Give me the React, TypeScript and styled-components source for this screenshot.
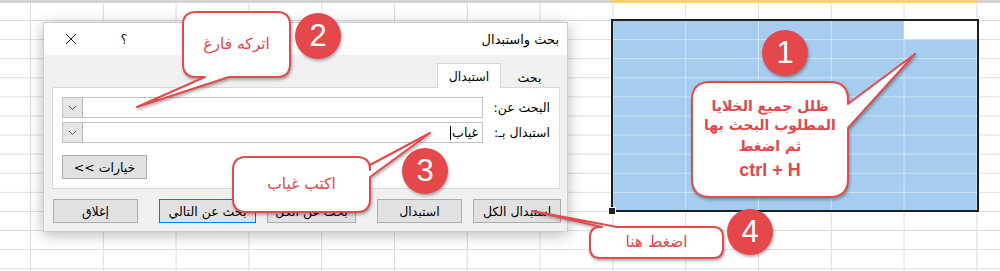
import React from "react";
import styled, { createGlobalStyle } from "styled-components";

const GlobalStyle = createGlobalStyle`
  html, body {
    margin: 0;
    padding: 0;
    background: #fff;
  }
  body {
    width: 1000px;
    height: 271px;
    overflow: hidden;
    font-family: "DejaVu Sans", "Liberation Sans", sans-serif;
  }
`;

const COL = 72.8;
const ROW = 19.1;
const RED = "#e4474b";

// sheet background
const Sheet = styled.div`
  position: relative;
  width: 1000px;
  height: 271px;
  overflow: hidden;
  background-color: #fff;
  background-image: linear-gradient(to right, #dcdcdc 1px, transparent 1px),
    linear-gradient(to bottom, #dcdcdc 1px, transparent 1px);
  background-size: ${COL}px ${ROW}px;
  background-position: 30px 20px;
`;

const HeaderEdge = styled.div`
  display: flex;
  height: 3px;
`;

const HeaderSegment = styled.div<{ $w?: number; $selected?: boolean }>`
  flex: ${(p) => (p.$w ? `0 0 ${p.$w}px` : "1")};
  background: ${(p) => (p.$selected ? "#f3d36f" : "#d4d4d4")};
`;

const Selection = styled.div`
  position: absolute;
  left: 611px;
  top: 19px;
  width: 368px;
  height: 193px;
  box-sizing: border-box;
  border: 2px solid #1f1f1f;
  background-color: #a6cdef;
  background-image: linear-gradient(to right, rgba(255, 255, 255, 0.45) 1px, transparent 1px),
    linear-gradient(to bottom, rgba(255, 255, 255, 0.45) 1px, transparent 1px);
  background-size: ${COL}px ${ROW}px;
  background-position: 72.2px 18.1px;
`;

const ActiveCell = styled.div`
  position: absolute;
  right: 0;
  top: 0;
  width: 73px;
  height: 18px;
  background: #fff;
`;

const FillHandle = styled.div`
  position: absolute;
  left: -5px;
  bottom: -5px;
  width: 6px;
  height: 6px;
  background: #1f1f1f;
  border: 1px solid #fff;
`;

// dialog
const Dialog = styled.div`
  position: absolute;
  left: 43px;
  top: 22px;
  width: 525px;
  height: 210px;
  box-sizing: border-box;
  display: flex;
  flex-direction: column;
  direction: rtl;
  border: 1px solid #cdcdcd;
  background: #f0f0f0;
  box-shadow: 0 3px 14px rgba(0, 0, 0, 0.28);
  font-size: 12.5px;
  color: #000;
`;

const TitleBar = styled.div`
  height: 32px;
  display: flex;
  align-items: center;
  background: #fff;
  padding-right: 8px;
`;

const Title = styled.div`
  flex: 1;
  font-size: 13px;
`;

const TitleButton = styled.div<{ $w: number }>`
  width: ${(p) => p.$w}px;
  height: 32px;
  display: flex;
  align-items: center;
  justify-content: center;
  color: #222;
  font-size: 13px;
`;

const Body = styled.div`
  flex: 1;
  display: flex;
  flex-direction: column;
  padding: 8px 7px 0 8px;
`;

const Tabs = styled.div`
  display: flex;
  height: 24px;
  padding-right: 2px;
`;

const Tab = styled.div<{ $w: number; $active?: boolean }>`
  width: ${(p) => p.$w}px;
  box-sizing: border-box;
  display: flex;
  align-items: center;
  justify-content: center;
  position: relative;
  z-index: 1;
  height: ${(p) => (p.$active ? "25px" : "22px")};
  margin-top: ${(p) => (p.$active ? "0" : "3px")};
  background: ${(p) => (p.$active ? "#fff" : "transparent")};
  border: 1px solid ${(p) => (p.$active ? "#d9d9d9" : "transparent")};
  border-bottom: none;
`;

const Panel = styled.div`
  height: 102px;
  box-sizing: border-box;
  background: #fff;
  border: 1px solid #d9d9d9;
  padding: 9px 0 0 9px;
  display: flex;
  flex-direction: column;
`;

const FieldGrid = styled.div`
  display: grid;
  grid-template-columns: 76px 421px;
  row-gap: 4px;
  align-items: center;
`;

const Label = styled.div`
  padding-right: 9px;
  white-space: nowrap;
`;

const Combo = styled.div`
  height: 21px;
  display: flex;
  box-sizing: border-box;
  border: 1px solid #c2c2c2;
  background: #fff;
`;

const ComboInput = styled.div`
  flex: 1;
  display: flex;
  align-items: center;
  padding-right: 4px;
`;

const Caret = styled.span`
  display: inline-block;
  width: 1px;
  height: 14px;
  background: #000;
  margin-right: 1px;
`;

const DropButton = styled.div`
  width: 19px;
  display: flex;
  align-items: center;
  justify-content: center;
  background: #e6e6e6;
  border-right: 1px solid #b4b4b4;
`;

const OptionsRow = styled.div`
  display: flex;
  justify-content: flex-end;
  margin-top: 12px;
`;

const DlgButton = styled.div<{ $w: number; $default?: boolean }>`
  width: ${(p) => p.$w}px;
  height: 24px;
  box-sizing: border-box;
  display: flex;
  align-items: center;
  justify-content: center;
  background: #e1e1e1;
  border: 1px solid ${(p) => (p.$default ? "#0078d7" : "#adadad")};
  white-space: nowrap;
`;

const ButtonRow = styled.div`
  display: flex;
  gap: 21px;
  margin-top: 10px;
  margin-right: -1px;
`;

const ButtonGroup = styled.div`
  display: flex;
  gap: 11px;
`;

// callouts
const CalloutBox = styled.div<{ $x: number; $y: number; $w: number; $h: number }>`
  position: absolute;
  left: ${(p) => p.$x}px;
  top: ${(p) => p.$y}px;
  width: ${(p) => p.$w}px;
  height: ${(p) => p.$h}px;
  display: flex;
  flex-direction: column;
  align-items: center;
  justify-content: center;
  direction: rtl;
  color: ${RED};
`;

const CalloutShape = styled.svg`
  position: absolute;
  left: 0;
  top: 0;
  overflow: visible;
  filter: drop-shadow(1px 2px 1.5px rgba(0, 0, 0, 0.3));
`;

const CalloutText = styled.div<{ $size?: number; $bold?: boolean; $line?: number; $latin?: boolean }>`
  position: relative;
  font-size: ${(p) => p.$size || 15.5}px;
  font-weight: ${(p) => (p.$bold ? 700 : 400)};
  line-height: ${(p) => p.$line || 19}px;
  font-family: ${(p) => (p.$latin ? `"Liberation Sans", Arial, sans-serif` : `"DejaVu Sans", sans-serif`)};
  white-space: nowrap;
`;

const Badge = styled.div<{ $cx: number; $cy: number }>`
  position: absolute;
  left: ${(p) => p.$cx - 23}px;
  top: ${(p) => p.$cy - 23}px;
  width: 46px;
  height: 46px;
  border-radius: 50%;
  background: #e5484b;
  box-shadow: 1px 2px 3px rgba(0, 0, 0, 0.3);
  color: #fff;
  font-family: "Liberation Sans", Arial, sans-serif;
  font-size: 31px;
  display: flex;
  align-items: center;
  justify-content: center;
`;

type Side = "top" | "right" | "bottom" | "left";

const calloutPath = (w: number, h: number, r: number, side: Side, a: number, b: number, tx: number, ty: number) => {
  const tip = `L ${tx} ${ty}`;
  let d = `M ${r} 0`;
  if (side === "top") d += ` L ${a} 0 ${tip} L ${b} 0`;
  d += ` L ${w - r} 0 Q ${w} 0 ${w} ${r}`;
  if (side === "right") d += ` L ${w} ${a} ${tip} L ${w} ${b}`;
  d += ` L ${w} ${h - r} Q ${w} ${h} ${w - r} ${h}`;
  if (side === "bottom") d += ` L ${b} ${h} ${tip} L ${a} ${h}`;
  d += ` L ${r} ${h} Q 0 ${h} 0 ${h - r}`;
  if (side === "left") d += ` L 0 ${b} ${tip} L 0 ${a}`;
  d += ` L 0 ${r} Q 0 0 ${r} 0 Z`;
  return d;
};

type CalloutProps = {
  x: number;
  y: number;
  w: number;
  h: number;
  r: number;
  side: Side;
  a: number;
  b: number;
  tip: [number, number];
  children: React.ReactNode;
};

const Callout = ({ x, y, w, h, r, side, a, b, tip, children }: CalloutProps) => (
  <CalloutBox $x={x} $y={y} $w={w} $h={h}>
    <CalloutShape width={w} height={h}>
      <path
        d={calloutPath(w, h, r, side, a, b, tip[0] - x, tip[1] - y)}
        fill="#fff"
        stroke="#e24a4c"
        strokeWidth={2}
        strokeLinejoin="round"
      />
    </CalloutShape>
    {children}
  </CalloutBox>
);

const Chevron = () => (
  <svg width="9" height="6" viewBox="0 0 9 6">
    <polyline points="1,1 4.5,4.5 8,1" fill="none" stroke="#555" strokeWidth="1" />
  </svg>
);

const CloseIcon = () => (
  <svg width="12" height="12" viewBox="0 0 12 12">
    <path d="M1 1 L11 11 M11 1 L1 11" stroke="#222" strokeWidth="1" />
  </svg>
);

const App = () => {
  return (
    <Sheet>
      <GlobalStyle />
      <HeaderEdge>
        <HeaderSegment $w={612} />
        <HeaderSegment $w={366} $selected />
        <HeaderSegment />
      </HeaderEdge>

      <Selection>
        <ActiveCell />
        <FillHandle />
      </Selection>

      <Dialog>
        <TitleBar>
          <Title>بحث واستبدال</Title>
          <TitleButton $w={52}>؟</TitleButton>
          <TitleButton $w={54}>
            <CloseIcon />
          </TitleButton>
        </TitleBar>
        <Body>
          <Tabs>
            <Tab $w={57}>بحث</Tab>
            <Tab $w={64} $active>
              استبدال
            </Tab>
          </Tabs>
          <Panel>
            <FieldGrid>
              <Label>البحث عن:</Label>
              <Combo>
                <ComboInput />
                <DropButton>
                  <Chevron />
                </DropButton>
              </Combo>
              <Label>استبدال بـ:</Label>
              <Combo>
                <ComboInput>
                  غياب
                  <Caret />
                </ComboInput>
                <DropButton>
                  <Chevron />
                </DropButton>
              </Combo>
            </FieldGrid>
            <OptionsRow>
              <DlgButton $w={85}>خيارات &gt;&gt;</DlgButton>
            </OptionsRow>
          </Panel>
          <ButtonRow>
            <ButtonGroup>
              <DlgButton $w={88}>استبدال الكل</DlgButton>
              <DlgButton $w={85}>استبدال</DlgButton>
            </ButtonGroup>
            <ButtonGroup>
              <DlgButton $w={89}>بحث عن الكل</DlgButton>
              <DlgButton $w={97} $default>
                بحث عن التالي
              </DlgButton>
            </ButtonGroup>
            <DlgButton $w={85}>إغلاق</DlgButton>
          </ButtonRow>
        </Body>
      </Dialog>

      <Callout x={183} y={12} w={107} h={65} r={13} side="bottom" a={22} b={46} tip={[137, 107]}>
        <CalloutText>اتركه فارغ</CalloutText>
      </Callout>
      <Callout x={233} y={157} w={137} h={55} r={13} side="right" a={8} b={20} tip={[430, 133]}>
        <CalloutText>اكتب غياب</CalloutText>
      </Callout>
      <Callout x={590} y={227} w={133} h={31} r={10} side="top" a={12} b={27} tip={[532, 211]}>
        <CalloutText>اضغط هنا</CalloutText>
      </Callout>
      <Callout x={692} y={82} w={156} h={115} r={18} side="right" a={22} b={46} tip={[915, 54]}>
        <CalloutText $bold $size={14}>ظلل جميع الخلايا</CalloutText>
        <CalloutText $bold $size={14}>المطلوب البحث بها</CalloutText>
        <CalloutText $bold $size={14} $line={23}>ثم اضغط</CalloutText>
        <CalloutText $bold $latin $size={18} $line={25}>
          ctrl + H
        </CalloutText>
      </Callout>

      <Badge $cx={785} $cy={53}>1</Badge>
      <Badge $cx={318} $cy={36}>2</Badge>
      <Badge $cx={425} $cy={171}>3</Badge>
      <Badge $cx={750} $cy={232}>4</Badge>
    </Sheet>
  );
};

export default App;
